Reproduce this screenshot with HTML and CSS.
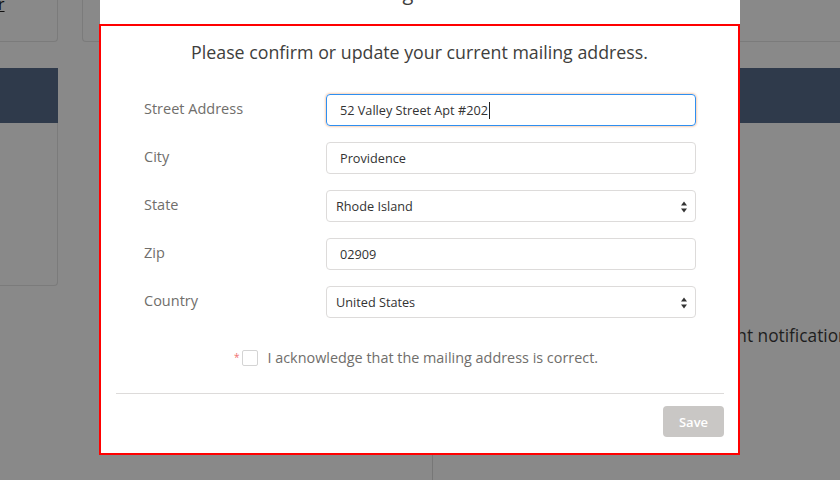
FILE: index.html
```html
<!DOCTYPE html>
<html>
<head>
<meta charset="utf-8">
<link rel="stylesheet" href="styles.css">
</head>
<body>
<div class="page">
  <div class="top-row">
    <div class="card card-a"><a class="link">r</a></div>
    <div class="card card-b"></div>
  </div>
  <div class="main-row">
    <div class="panel panel-left">
      <div class="panel-head"></div>
    </div>
    <div class="panel panel-right">
      <div class="panel-head"></div>
      <div class="notify">Payment notifications</div>
      <div class="split"></div>
    </div>
  </div>
</div>

<div class="modal">
  <div class="modal-header"><h2 class="modal-title">Mailing Address</h2></div>
  <div class="modal-box">
    <p class="intro">Please confirm or update your current mailing address.</p>
    <div class="form">
      <div class="row">
        <label class="label">Street Address</label>
        <div class="field field-focus">52 Valley Street Apt #202<span class="caret"></span></div>
      </div>
      <div class="row">
        <label class="label">City</label>
        <div class="field">Providence</div>
      </div>
      <div class="row">
        <label class="label">State</label>
        <div class="field field-select">Rhode Island
          <svg class="arrows" width="8" height="12" viewBox="0 0 8 12"><path d="M4 0.5 L7 4.5 L1 4.5 Z M1 7.5 L7 7.5 L4 11.5 Z" fill="#333"/></svg>
        </div>
      </div>
      <div class="row">
        <label class="label">Zip</label>
        <div class="field">02909</div>
      </div>
      <div class="row">
        <label class="label">Country</label>
        <div class="field field-select">United States
          <svg class="arrows" width="8" height="12" viewBox="0 0 8 12"><path d="M4 0.5 L7 4.5 L1 4.5 Z M1 7.5 L7 7.5 L4 11.5 Z" fill="#333"/></svg>
        </div>
      </div>
    </div>
    <div class="ack">
      <span class="req">*</span>
      <span class="check"></span>
      <span class="ack-text">I acknowledge that the mailing address is correct.</span>
    </div>
    <div class="footer">
      <button class="save">Save</button>
    </div>
  </div>
</div>
</body>
</html>
```
FILE: styles.css
```css
html, body {
  margin: 0;
  padding: 0;
}
body {
  width: 840px;
  height: 480px;
  overflow: hidden;
  background: #898989;
  font-family: "Open Sans", "Noto Sans", sans-serif;
}
.page {
  position: relative;
  width: 840px;
  height: 480px;
}
.top-row {
  display: flex;
  gap: 24px;
  height: 42px;
  margin-left: -10px;
}
.card {
  border: 1px solid #7b7b7b;
  border-top: none;
  box-sizing: border-box;
  height: 42px;
}
.card-a {
  width: 68px;
  flex-shrink: 0;
  border-left: none;
  border-radius: 0 0 4px 0;
  padding: 0 0 0 8px;
}
.link {
  font-size: 16px;
  color: #111;
  text-decoration: underline;
  line-height: 16px;
  display: block;
  margin-top: -4px;
}
.card-b {
  flex: 1;
  border-right: none;
  border-radius: 0 0 0 4px;
}
.main-row {
  display: flex;
  margin-top: 26px;
}
.panel-left {
  width: 58px;
  flex-shrink: 0;
  height: 218px;
  border-right: 1px solid #7b7b7b;
  border-bottom: 1px solid #7b7b7b;
  border-radius: 0 0 4px 0;
  box-sizing: border-box;
}
.panel-head {
  height: 55px;
  background: #2f3a4b;
}
.panel-left .panel-head {
  margin-right: -1px;
}
.panel-right {
  flex: 1;
  min-width: 0;
  margin-left: 374px;
  position: relative;
}
.notify {
  margin-top: 201px;
  margin-left: 250px;
  font-size: 17.3px;
  color: #1e1e1e;
  white-space: nowrap;
  line-height: 24px;
}
.split {
  position: absolute;
  left: 0;
  top: 387px;
  width: 1px;
  height: 40px;
  background: #777;
}

/* modal */
.modal {
  position: absolute;
  left: 99px;
  top: -30px;
  width: 641px;
}
.modal-header {
  background: #fff;
  height: 54px;
  margin-left: 1px;
  text-align: center;
  overflow: hidden;
}
.modal-title {
  margin: 0;
  font-size: 20px;
  font-weight: 400;
  color: #3e3e3c;
  line-height: 26px;
  padding-top: 10px;
}
.modal-box {
  background: #fff;
  border: 2px solid #ff0000;
  height: 431px;
  box-sizing: border-box;
  padding: 13px 14px 0 15px;
}
.intro {
  margin: 0;
  text-align: center;
  font-size: 17.8px;
  color: #3e3e3c;
  line-height: 26px;
  padding-right: 1px;
}
.form {
  display: flex;
  flex-direction: column;
  gap: 16px;
  margin-top: 29px;
  padding: 0 28px;
}
.row {
  display: flex;
  align-items: center;
}
.label {
  width: 182px;
  font-size: 14.5px;
  color: #706e6b;
  margin-top: -3px;
}
.field {
  position: relative;
  width: 370px;
  height: 32px;
  box-sizing: border-box;
  border: 1px solid #dddbda;
  border-radius: 4px;
  padding: 0 13px;
  font-size: 12.7px;
  color: #333;
  line-height: 30px;
  display: flex;
  align-items: center;
}
.field-focus {
  border-color: #2f8ff0;
  box-shadow: 0 0 2px 1px #f8d2b8;
}
.caret {
  display: inline-block;
  width: 1px;
  height: 17px;
  background: #222;
  margin-left: 1px;
}
.field-select {
  padding-left: 9px;
}
.arrows {
  position: absolute;
  right: 7px;
  top: 10px;
}
.ack {
  display: flex;
  align-items: center;
  justify-content: center;
  margin-top: 30px;
  padding-right: 8px;
}
.req {
  color: #f07070;
  font-size: 10px;
  margin-right: 3px;
  margin-top: -2px;
}
.check {
  width: 16px;
  height: 16px;
  border: 1px solid #d4d4d4;
  border-radius: 2px;
  box-sizing: border-box;
  margin-right: 9px;
}
.ack-text {
  font-size: 14.4px;
  color: #706e6b;
}
.footer {
  margin-top: 26px;
  border-top: 1px solid #dddbda;
  display: flex;
  justify-content: flex-end;
  padding-top: 12px;
}
.save {
  width: 61px;
  height: 31px;
  border: none;
  border-radius: 4px;
  background: #c9c7c5;
  color: #fff;
  font-family: inherit;
  font-size: 13px;
  font-weight: 600;
}
```
